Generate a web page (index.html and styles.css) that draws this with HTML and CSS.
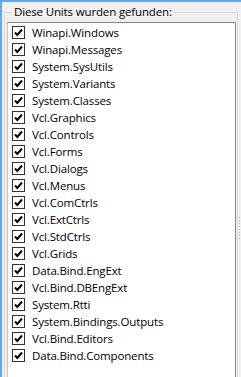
FILE: index.html
```html
<!DOCTYPE html>
<html>
<head>
    <title>Units</title>
    <link rel="stylesheet" href="styles.css">
</head>
<body>
    <fieldset class="group">
        <legend>Diese Units wurden gefunden:</legend>
        <div class="list">
            <div class="item"><span class="check"><svg width="11" height="11" viewBox="0 0 11 11"><path d="M2 5.5 L4.3 8 L9 2.5" /></svg></span>Winapi.Windows</div>
            <div class="item"><span class="check"><svg width="11" height="11" viewBox="0 0 11 11"><path d="M2 5.5 L4.3 8 L9 2.5" /></svg></span>Winapi.Messages</div>
            <div class="item"><span class="check"><svg width="11" height="11" viewBox="0 0 11 11"><path d="M2 5.5 L4.3 8 L9 2.5" /></svg></span>System.SysUtils</div>
            <div class="item"><span class="check"><svg width="11" height="11" viewBox="0 0 11 11"><path d="M2 5.5 L4.3 8 L9 2.5" /></svg></span>System.Variants</div>
            <div class="item"><span class="check"><svg width="11" height="11" viewBox="0 0 11 11"><path d="M2 5.5 L4.3 8 L9 2.5" /></svg></span>System.Classes</div>
            <div class="item"><span class="check"><svg width="11" height="11" viewBox="0 0 11 11"><path d="M2 5.5 L4.3 8 L9 2.5" /></svg></span>Vcl.Graphics</div>
            <div class="item"><span class="check"><svg width="11" height="11" viewBox="0 0 11 11"><path d="M2 5.5 L4.3 8 L9 2.5" /></svg></span>Vcl.Controls</div>
            <div class="item"><span class="check"><svg width="11" height="11" viewBox="0 0 11 11"><path d="M2 5.5 L4.3 8 L9 2.5" /></svg></span>Vcl.Forms</div>
            <div class="item"><span class="check"><svg width="11" height="11" viewBox="0 0 11 11"><path d="M2 5.5 L4.3 8 L9 2.5" /></svg></span>Vcl.Dialogs</div>
            <div class="item"><span class="check"><svg width="11" height="11" viewBox="0 0 11 11"><path d="M2 5.5 L4.3 8 L9 2.5" /></svg></span>Vcl.Menus</div>
            <div class="item"><span class="check"><svg width="11" height="11" viewBox="0 0 11 11"><path d="M2 5.5 L4.3 8 L9 2.5" /></svg></span>Vcl.ComCtrls</div>
            <div class="item"><span class="check"><svg width="11" height="11" viewBox="0 0 11 11"><path d="M2 5.5 L4.3 8 L9 2.5" /></svg></span>Vcl.ExtCtrls</div>
            <div class="item"><span class="check"><svg width="11" height="11" viewBox="0 0 11 11"><path d="M2 5.5 L4.3 8 L9 2.5" /></svg></span>Vcl.StdCtrls</div>
            <div class="item"><span class="check"><svg width="11" height="11" viewBox="0 0 11 11"><path d="M2 5.5 L4.3 8 L9 2.5" /></svg></span>Vcl.Grids</div>
            <div class="item"><span class="check"><svg width="11" height="11" viewBox="0 0 11 11"><path d="M2 5.5 L4.3 8 L9 2.5" /></svg></span>Data.Bind.EngExt</div>
            <div class="item"><span class="check"><svg width="11" height="11" viewBox="0 0 11 11"><path d="M2 5.5 L4.3 8 L9 2.5" /></svg></span>Vcl.Bind.DBEngExt</div>
            <div class="item"><span class="check"><svg width="11" height="11" viewBox="0 0 11 11"><path d="M2 5.5 L4.3 8 L9 2.5" /></svg></span>System.Rtti</div>
            <div class="item"><span class="check"><svg width="11" height="11" viewBox="0 0 11 11"><path d="M2 5.5 L4.3 8 L9 2.5" /></svg></span>System.Bindings.Outputs</div>
            <div class="item"><span class="check"><svg width="11" height="11" viewBox="0 0 11 11"><path d="M2 5.5 L4.3 8 L9 2.5" /></svg></span>Vcl.Bind.Editors</div>
            <div class="item"><span class="check"><svg width="11" height="11" viewBox="0 0 11 11"><path d="M2 5.5 L4.3 8 L9 2.5" /></svg></span>Data.Bind.Components</div>
        </div>
    </fieldset>
    <div class="grip"></div>
</body>
</html>
```

FILE: styles.css
```css
html, body {
    height: 100%;
}
body {
    margin: 0;
    overflow: hidden;
    background: #f0f0f0;
    border-top: 2px solid #62a8ec;
    border-left: 2px solid #62a8ec;
    box-sizing: border-box;
    font-family: "Open Sans", "Liberation Sans", sans-serif;
    font-size: 11.5px;
    letter-spacing: -0.15px;
    color: #000;
    position: relative;
}
.group {
    margin: 2px 3px 0 2px;
    padding: 0;
    border: 1px solid #dcdcdc;
    min-width: 0;
}
.group legend {
    margin-left: 7px;
    padding: 0 2px;
    line-height: 16px;
}
.list {
    margin: 2px 1px 0 2px;
    height: 360px;
    background: #fff;
    border: 1px solid #828790;
    border-left-color: #c4c4c4;
    padding-top: 1px;
}
.item {
    height: 17px;
    display: flex;
    align-items: center;
    padding-left: 4px;
    gap: 7px;
    white-space: nowrap;
}
.check {
    width: 11px;
    height: 11px;
    border: 1px solid #333;
    background: #fff;
    display: flex;
}
.check path {
    fill: none;
    stroke: #000;
    stroke-width: 2;
}
.grip {
    position: absolute;
    right: 1px;
    top: 215px;
    width: 1px;
    height: 22px;
    background: repeating-linear-gradient(#b0b0b0 0 1px, transparent 1px 3px);
}
```
